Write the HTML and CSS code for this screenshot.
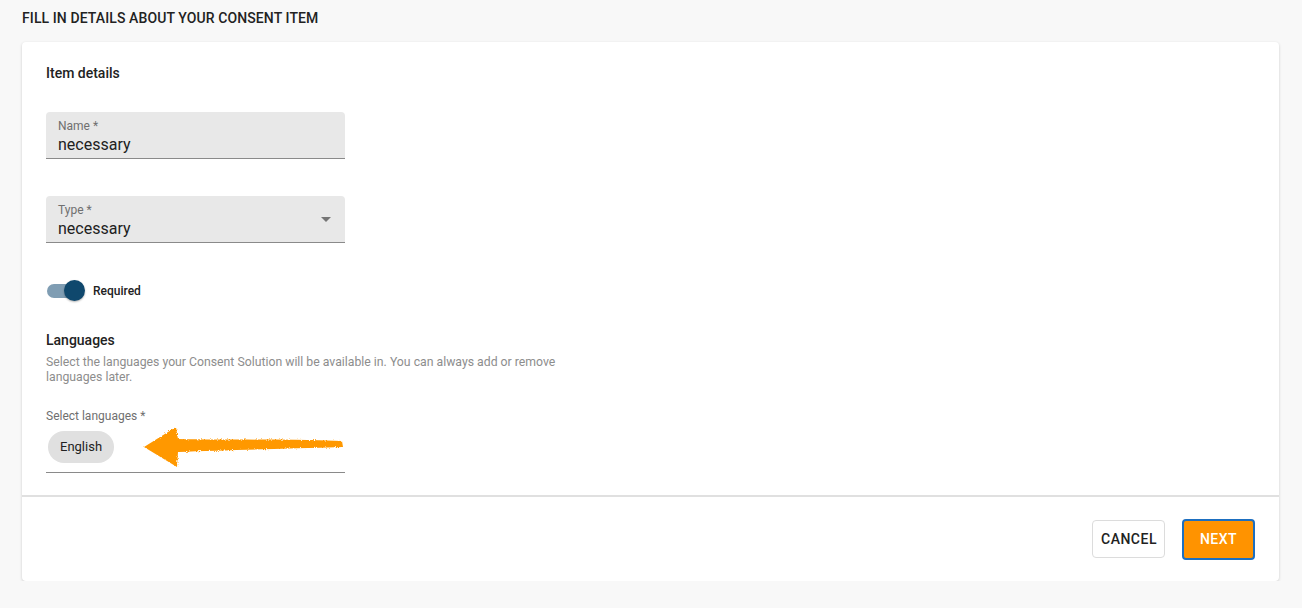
FILE: index.html
```html
<!DOCTYPE html>
<html>
	<head>
		<meta charset="UTF-8">
		<title>Consent item</title>
		<link rel="stylesheet" href="styles.css">
	</head>
	<body>
		<div class="page">
			<h1 class="page-title">FILL IN DETAILS ABOUT YOUR CONSENT ITEM</h1>
			<div class="card">
				<div class="card-body">
					<h2 class="section-title">Item details</h2>

					<div class="field">
						<span class="field-label">Name *</span>
						<span class="field-value">necessary</span>
					</div>

					<div class="field field-select">
						<span class="field-label">Type *</span>
						<span class="field-value">necessary</span>
						<span class="caret"></span>
					</div>

					<div class="switch-row">
						<span class="switch"><span class="switch-track"></span><span class="switch-thumb"></span></span>
						<span class="switch-label">Required</span>
					</div>

					<h3 class="lang-title">Languages</h3>
					<p class="lang-desc">Select the languages your Consent Solution will be available in. You can always add or remove languages later.</p>

					<div class="chips-field">
						<span class="chips-label">Select languages *</span>
						<div class="chips">
							<span class="chip">English</span>
						</div>
						<!-- annotation arrow -->
						<svg class="arrow" width="210" height="46" viewBox="0 0 210 46">
							<defs>
								<filter id="rough">
									<feTurbulence type="fractalNoise" baseFrequency="0.9" numOctaves="2" result="n"/>
									<feDisplacementMap in="SourceGraphic" in2="n" scale="3"/>
								</filter>
							</defs>
							<g fill="#ff9800" filter="url(#rough)">
								<path d="M2 22 L34 2 L36 14 C80 15 140 14 200 16 L201 22 C140 24 80 25 36 27 L35 42 Z"/>
							</g>
						</svg>
					</div>
				</div>
				<div class="card-footer">
					<button class="btn btn-cancel">CANCEL</button>
					<button class="btn btn-next">NEXT</button>
				</div>
			</div>
		</div>
	</body>
</html>
```

FILE: styles.css
```css
* { margin:0; padding:0; box-sizing:border-box; }
html, body { background:#f8f8f8; }
body { font-family:Roboto, "Liberation Sans", Arial, sans-serif; color:#212121; }

.page { padding:9px 22px 0 22px; }
.page-title { font-size:14px; font-weight:500; line-height:18px; letter-spacing:0.1px; color:#222; margin-bottom:15px; }

.card { background:#fff; border-radius:4px; box-shadow:0 1px 3px rgba(0,0,0,0.18); width:1257px; }
.card-body { padding:23px 24px 24px 24px; border-bottom:2px solid #e0e0e0; height:455px; }

.section-title { font-size:14px; font-weight:500; line-height:16px; color:#222; margin-bottom:31px; }

/* input fields */
.field { position:relative; width:299px; height:47px; background:#e8e8e8; border-radius:4px 4px 0 0; border-bottom:1px solid #8a8a8a; padding:7px 12px 0 12px; display:flex; flex-direction:column; margin-bottom:37px; }
.field-label { font-size:12px; line-height:14px; color:#6f6f6f; }
.field-value { font-size:16px; line-height:20px; color:#212121; margin-top:2px; }
.caret { position:absolute; right:14px; top:21px; width:0; height:0; border-left:5px solid transparent; border-right:5px solid transparent; border-top:5px solid #757575; }

/* switch */
.switch-row { display:flex; align-items:center; margin-top:-2px; height:26px; }
.switch { position:relative; width:38px; height:22px; margin-left:1px; }
.switch-track { position:absolute; left:0; top:4px; width:34px; height:14px; border-radius:7px; background:#7f9db3; }
.switch-thumb { position:absolute; left:17px; top:0; width:21px; height:21px; border-radius:50%; background:#0f486d; box-shadow:0 1px 2px rgba(0,0,0,0.3); }
.switch-label { font-size:12px; font-weight:500; color:#222; margin-left:8px; }

.lang-title { font-size:14px; font-weight:500; line-height:18px; color:#222; margin-top:27px; }
.lang-desc { font-size:12.25px; line-height:15px; color:#8d8d8d; width:540px; margin-top:6px; }

/* chips */
.chips-field { position:relative; width:299px; margin-top:24px; border-bottom:1px solid #8a8a8a; height:64px; }
.chips-label { display:block; font-size:12px; line-height:14px; color:#6f6f6f; }
.chips { margin-top:8px; padding-left:2px; }
.chip { display:inline-block; height:32px; line-height:32px; padding:0 12px; border-radius:16px; background:#e0e0e0; font-size:13px; color:#222; }
.arrow { position:absolute; left:96px; top:16px; }

/* footer */
.card-footer { display:flex; justify-content:flex-end; align-items:center; gap:17px; height:84px; padding-right:24px; }
.btn { font-family:Roboto, "Liberation Sans", Arial, sans-serif; font-size:14px; font-weight:500; letter-spacing:0.5px; height:38px; padding:0 8px; border-radius:4px; cursor:pointer; }
.btn-cancel { background:#fff; color:#222; border:1px solid #dcdcdc; width:73px; }
.btn-next { background:#ff9300; color:#fff; border:2px solid #1d6fc0; width:73px; height:41px; }
```
